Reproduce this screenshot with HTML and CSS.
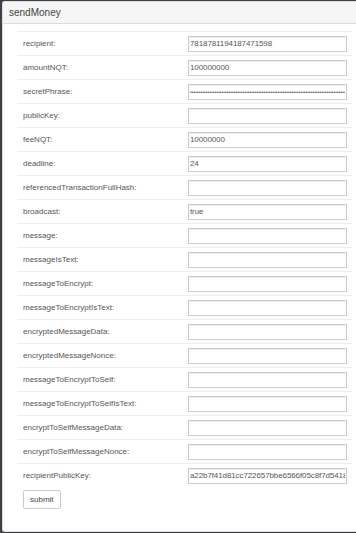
FILE: index.html
```html
<!DOCTYPE html>
<html lang="en">
<head>
    <meta charset="UTF-8">
    <title>sendMoney</title>
    <link rel="stylesheet" href="styles.css">
</head>
<body>
    <div class="panel">
        <div class="panel-heading">sendMoney</div>
        <div class="panel-body">
            <table class="form-table">
                <tr><td class="label">recipient:</td><td><input type="text" value="7818781194187471598"></td></tr>
                <tr><td class="label">amountNQT:</td><td><input type="text" value="100000000"></td></tr>
                <tr><td class="label">secretPhrase:</td><td><input type="password" value="correct horse battery staple secret phrase goes here for testing the api form ok and some more words to fill"></td></tr>
                <tr><td class="label">publicKey:</td><td><input type="text"></td></tr>
                <tr><td class="label">feeNQT:</td><td><input type="text" value="10000000"></td></tr>
                <tr><td class="label">deadline:</td><td><input type="text" value="24"></td></tr>
                <tr><td class="label">referencedTransactionFullHash:</td><td><input type="text"></td></tr>
                <tr><td class="label">broadcast:</td><td><input type="text" value="true"></td></tr>
                <tr><td class="label">message:</td><td><input type="text"></td></tr>
                <tr><td class="label">messageIsText:</td><td><input type="text"></td></tr>
                <tr><td class="label">messageToEncrypt:</td><td><input type="text"></td></tr>
                <tr><td class="label">messageToEncryptIsText:</td><td><input type="text"></td></tr>
                <tr><td class="label">encryptedMessageData:</td><td><input type="text"></td></tr>
                <tr><td class="label">encryptedMessageNonce:</td><td><input type="text"></td></tr>
                <tr><td class="label">messageToEncryptToSelf:</td><td><input type="text"></td></tr>
                <tr><td class="label">messageToEncryptToSelfIsText:</td><td><input type="text"></td></tr>
                <tr><td class="label">encryptToSelfMessageData:</td><td><input type="text"></td></tr>
                <tr><td class="label">encryptToSelfMessageNonce:</td><td><input type="text"></td></tr>
                <tr><td class="label">recipientPublicKey:</td><td><input type="text" value="a22b7f41d81cc722657bbe6566f05c8f7d5418"></td></tr>
            </table>
            <button class="submit-btn">submit</button>
        </div>
    </div>
</body>
</html>
```

FILE: styles.css
```css
body {
    margin: 0;
    padding: 1px 0 0 2px;
    background-color: #3c4147;
    font-family: 'Liberation Sans', Arial, sans-serif;
    font-size: 8px;
    color: #555;
}

.panel {
    background-color: white;
    border: 1px solid #ddd;
    border-right: none;
    border-radius: 3px 0 0 3px;
    min-height: 531px;
    box-sizing: border-box;
}

.panel-heading {
    background-color: #f5f5f5;
    border-bottom: 1px solid #ddd;
    color: #444;
    font-size: 10px;
    height: 21px;
    line-height: 21px;
    padding-left: 6px;
}

.panel-body {
    padding: 7px 0 0 15px;
}

.form-table {
    width: 334px;
    border-collapse: collapse;
}

.form-table td {
    border-top: 1px solid #eee;
    height: 23px;
    padding: 0;
    vertical-align: middle;
}

.form-table td.label {
    padding-left: 5px;
    width: 165px;
}

.form-table input {
    width: 159px;
    height: 16px;
    box-sizing: border-box;
    border: 1px solid #ccc;
    padding: 0 1px;
    font-family: 'Liberation Sans', Arial, sans-serif;
    font-size: 8px;
    letter-spacing: -0.1px;
    color: #555;
    box-shadow: inset 0 1px 1px rgba(0, 0, 0, 0.075);
}

.form-table input[type="password"] {
    font-size: 5px;
    letter-spacing: 0;
}

.submit-btn {
    margin: 3px 0 0 5px;
    background-color: white;
    border: 1px solid #ccc;
    border-radius: 2px;
    height: 19px;
    padding: 0 6px;
    font-family: 'Liberation Sans', Arial, sans-serif;
    font-size: 8px;
    color: #444;
}
```
